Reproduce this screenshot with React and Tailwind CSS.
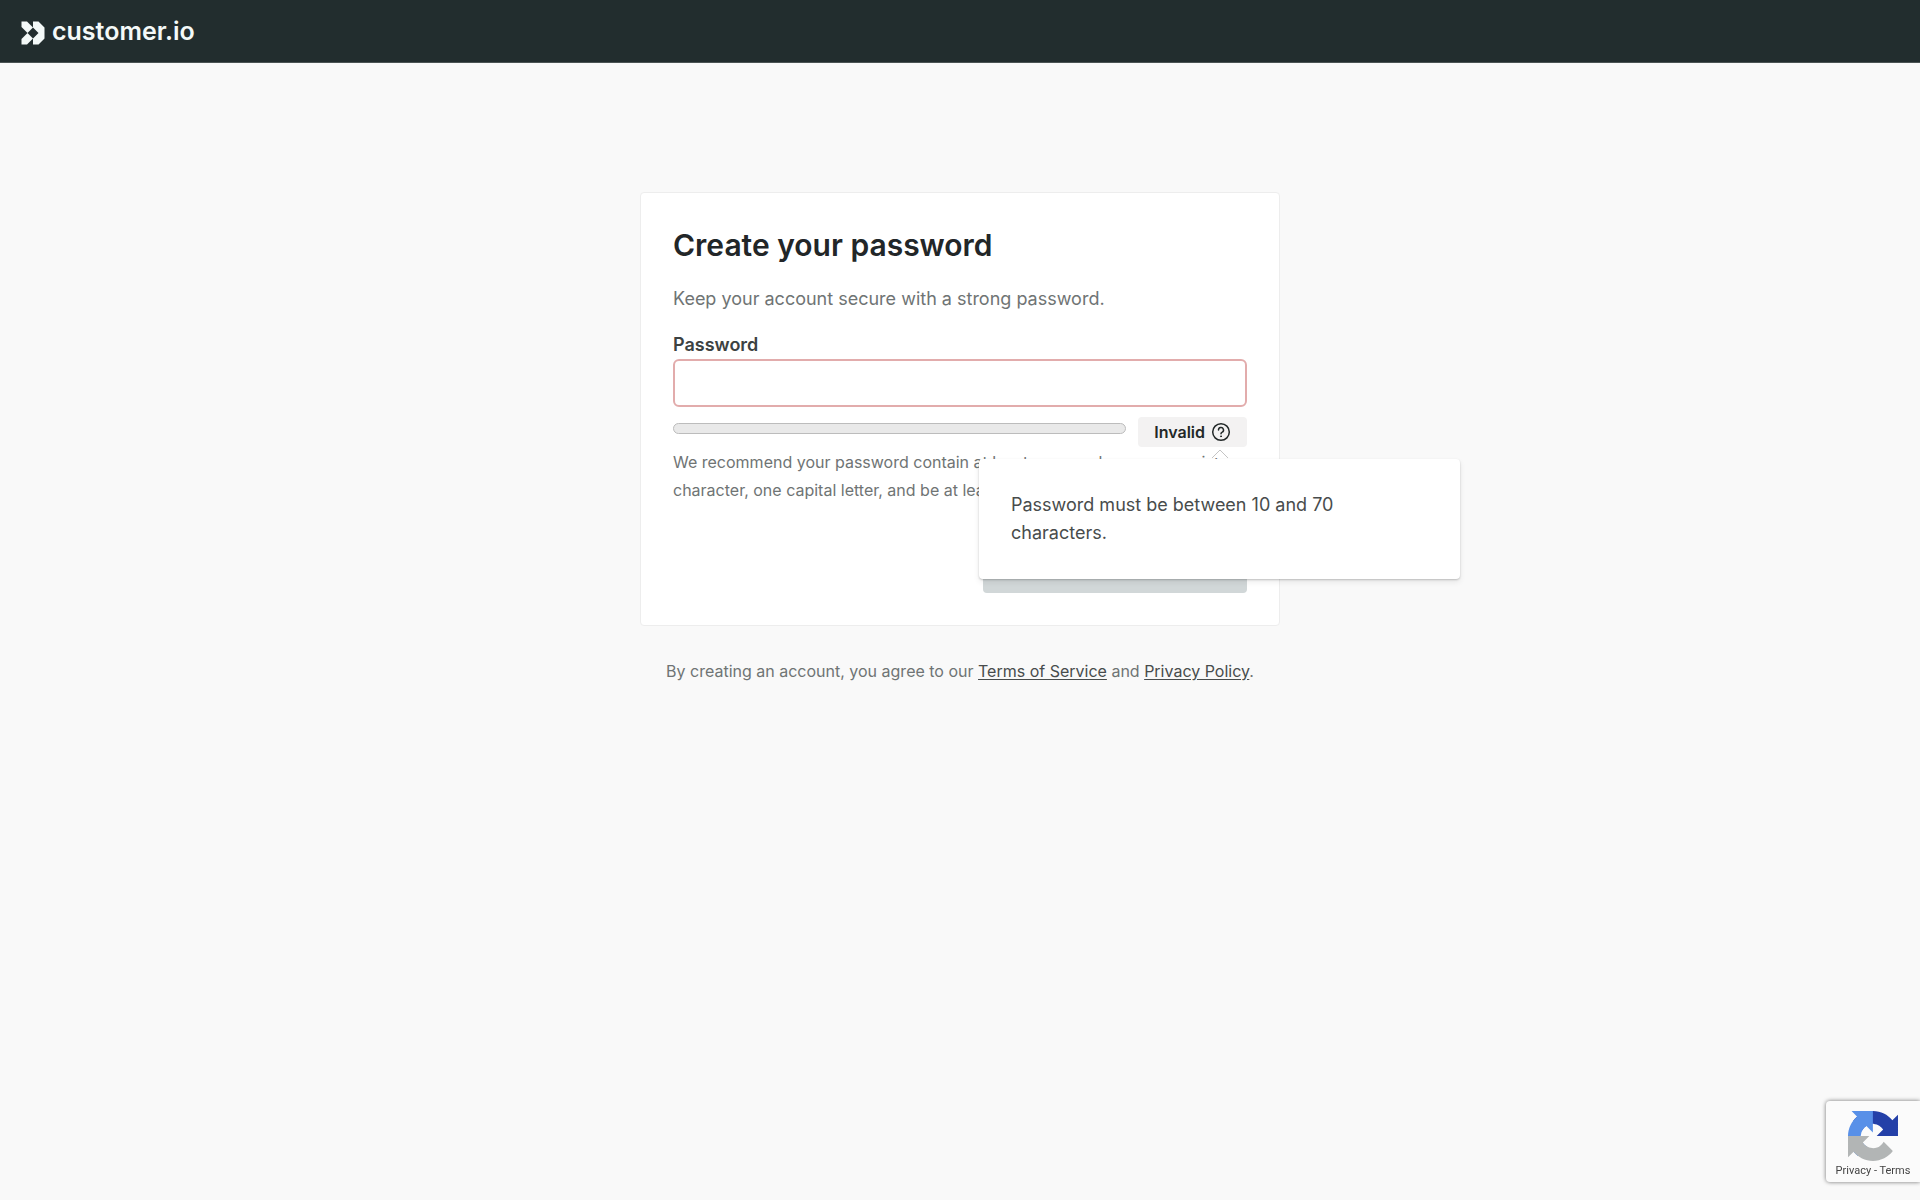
import React from "react";

function LogoMark() {
  return (
    <svg width="24" height="24" viewBox="0 0 24 24" fill="#f4f9f8" aria-hidden="true">
      <path d="M.5.5h5.500L12 6.500 6.500 12 .5 6z" />
      <path d="M.5 23.500h5.500l6-6L6.500 12l-6 6z" />
      <path d="M12 .5h5.500l6 6v11l-6 6H12V17.500L17.500 12 12 6.500z" />
    </svg>
  );
}

function HelpIcon() {
  return (
    <svg width="20" height="20" viewBox="0 0 20 20" fill="none" stroke="#222828" strokeWidth="1.5" strokeLinecap="round" aria-hidden="true">
      <circle cx="10" cy="10" r="8.300" />
      <path d="M7.500 8a2.500 2.500 0 1 1 3.700 2.200c-.8.400-1.200.8-1.200 1.500" />
      <circle cx="10" cy="14.300" r=".5" fill="#222828" strokeWidth="1" />
    </svg>
  );
}

function RecaptchaIcon() {
  return (
    <svg width="50" height="50" viewBox="0 0 64 64" aria-hidden="true">
      <path d="M64 31.955l-.033-1.370V4.687l-7.160 7.160C50.948 4.674 42.033.093 32.050.093c-10.400 0-19.622 4.960-25.458 12.640l11.736 11.860a15.550 15.550 0 0 1 4.754-5.334c2.050-1.600 4.952-2.906 8.968-2.906.485 0 .86.057 1.135.163 4.976.393 9.288 3.140 11.828 7.124l-8.307 8.307L64 31.953" fill="#2440a8" />
      <path d="M31.862.094l-1.370.033H4.594l7.160 7.160C4.580 13.147 0 22.060 0 32.046c0 10.400 4.960 19.622 12.640 25.458L24.500 45.768a15.550 15.550 0 0 1-5.334-4.754c-1.600-2.050-2.906-4.952-2.906-8.968 0-.485.057-.86.163-1.135.393-4.976 3.140-9.288 7.124-11.828l8.307 8.307L31.860.095" fill="#5890e8" />
      <path d="M.001 32.045l.033 1.370v25.898l7.160-7.160c5.860 7.173 14.774 11.754 24.760 11.754 10.400 0 19.622-4.960 25.458-12.640l-11.736-11.860a15.550 15.550 0 0 1-4.754 5.334c-2.050 1.600-4.952 2.906-8.968 2.906-.485 0-.86-.057-1.135-.163-4.976-.393-9.288-3.140-11.828-7.124l8.307-8.307L.003 32.047" fill="#b2b5b5" />
    </svg>
  );
}

function ErrorPopover() {
  return (
    <div id="password-error" role="tooltip" className="absolute top-full -right-[213px] z-10 mt-3 w-[481px] rounded bg-white p-8 text-left text-lg leading-7 font-normal text-[#484c4c] shadow-[0_1px_2px_rgba(0,0,0,0.2),0_3px_6px_rgba(0,0,0,0.08)]">
      <svg className="absolute -top-2.5 left-[232px]" width="18" height="10" viewBox="0 0 18 10" fill="#fff" stroke="#c4c4c4" aria-hidden="true">
        <path d="M1 9l8-8 8 8" />
      </svg>
      Password must be between 10 and 70 characters.
    </div>
  );
}

export default function App() {
  return (
    <div className="flex min-h-screen flex-col bg-[#f9f9f9] font-['Inter',sans-serif] text-[#6f7474]">
      <header className="border-b border-[#4b5454] bg-[#222d2e]">
        <a href="#" className="flex h-[62px] w-fit items-center gap-[7px] pt-1 pl-[21px] text-[#f4f9f8]">
          <LogoMark />
          <span className="pb-1 text-[25px] leading-8 font-semibold">customer.io</span>
        </a>
      </header>

      <main className="mt-[129px] flex flex-col items-center">
        <form className="w-full max-w-[640px] rounded border border-[#ededed] bg-white p-8" onSubmit={(e) => e.preventDefault()}>
          <h1 className="text-3xl leading-10 font-semibold text-[#222628]">Create your password</h1>
          <p className="mt-5 text-lg leading-7">Keep your account secure with a strong password.</p>
          <label htmlFor="password" className="mt-5 mb-0.5 block text-lg leading-6 font-semibold text-[#3c4242]">Password</label>
          <input id="password" type="password" aria-invalid="true" aria-describedby="password-error" className="block h-12 w-full rounded-md border-2 border-[#e2acac] bg-white px-3 text-lg outline-none" />
          <div className="mt-2.5 flex items-start gap-3">
            <div className="mt-1.5 h-[11px] flex-1 rounded-full border border-[#bcbcbc] bg-[#e9e9e9]" />
            <div className="relative">
              <button type="button" className="flex h-[30px] items-center gap-1.5 rounded bg-[#f3f2f2] px-4 font-semibold text-[#222828]">
                Invalid
                <HelpIcon />
              </button>
              <ErrorPopover />
            </div>
          </div>
          <p className="mt-px text-base leading-7">
            We recommend your password contain at least one number, one special character, one capital letter, and be at least 10 characters long.
          </p>
          <div className="mt-[41px] flex justify-end">
            <button type="submit" disabled className="h-12 w-[264px] rounded bg-[#d1d7d8] text-lg font-semibold text-white">Finish account setup</button>
          </div>
        </form>
        <p className="mt-[31px] text-base leading-7">
          By creating an account, you agree to our <a href="#" className="text-[#484c4c] underline underline-offset-2">Terms of Service</a> and <a href="#" className="text-[#484c4c] underline underline-offset-2">Privacy Policy</a>.
        </p>
      </main>

      <aside className="fixed right-0 bottom-[18px] flex w-[94px] flex-col items-center rounded-l bg-[#fbfbfb] pt-2.5 pb-[3px] font-['Roboto',sans-serif] text-[11px] leading-4 text-[#444] shadow-[0_0_4px_rgba(0,0,0,0.55)]">
        <RecaptchaIcon />
        <p className="mt-0.5 whitespace-nowrap">
          <a href="#">Privacy</a> - <a href="#">Terms</a>
        </p>
      </aside>
    </div>
  );
}
